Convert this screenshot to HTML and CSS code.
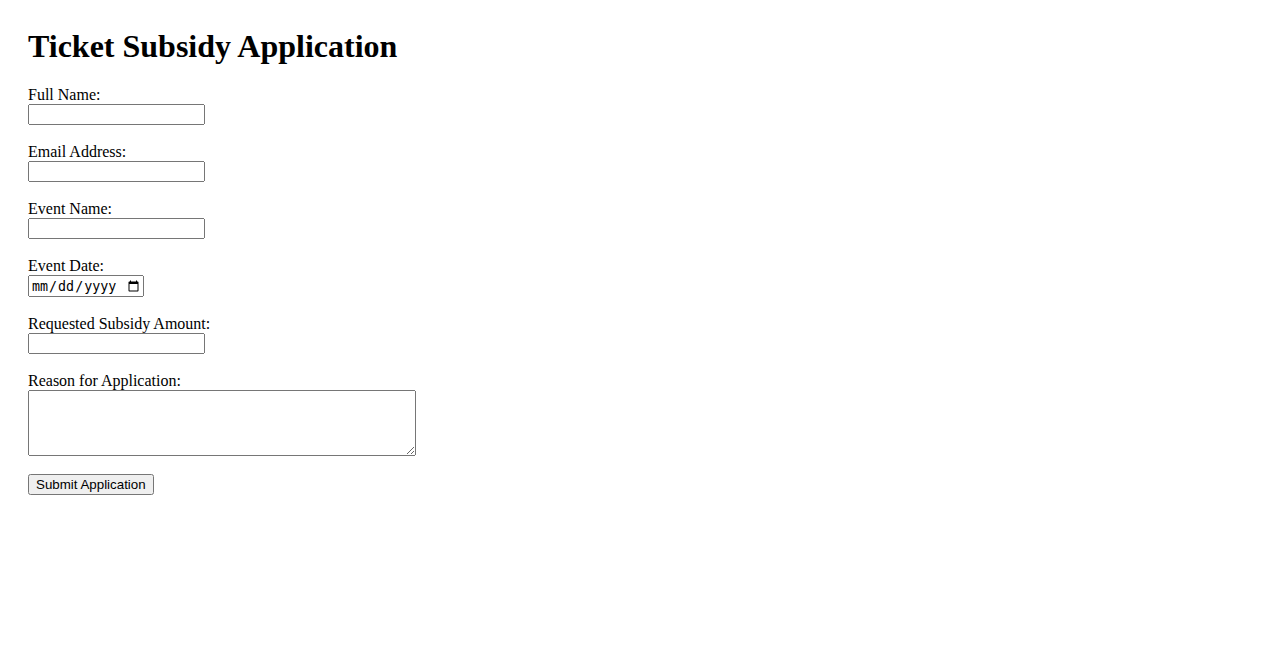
FILE: index.html
```html
<!DOCTYPE html>
<html>
<head>
<meta charset="utf-8">
<title>Ticket Subsidy Application</title>
<link rel="stylesheet" href="styles.css">
</head>
<body>
<div class="page">
<h1 class="title">Ticket Subsidy Application</h1>
<form class="form">
<label for="name">Full Name:</label><br>
<input type="text" id="name" name="name"><br><br>
<label for="email">Email Address:</label><br>
<input type="email" id="email" name="email"><br><br>
<label for="event">Event Name:</label><br>
<input type="text" id="event" name="event"><br><br>
<label for="date">Event Date:</label><br>
<input type="date" id="date" name="date"><br><br>
<label for="amount">Requested Subsidy Amount:</label><br>
<input type="number" id="amount" name="amount"><br><br>
<label for="reason">Reason for Application:</label><br>
<textarea id="reason" name="reason" rows="4" cols="50"></textarea><br><br>
<input type="submit" value="Submit Application">
</form>
</div>
</body>
</html>
```

FILE: styles.css
```css
body {
  margin: 8px;
  font-family: "Liberation Serif", "Times New Roman", serif;
  color: #000;
  background: #fff;
}
.page {
  padding: 20px;
}
.title {
  margin-top: 0;
  font-size: 32px;
}
.form input[type="text"],
.form input[type="email"],
.form input[type="number"] {
  width: 177px;
  height: 21px;
  box-sizing: border-box;
}
.form input[type="date"] {
  width: 116px;
  height: 22px;
  box-sizing: border-box;
}
.form textarea {
  width: 388px;
  height: 66px;
  box-sizing: border-box;
  vertical-align: top;
}
.form input[type="submit"] {
  font-family: "Liberation Sans", Arial, sans-serif;
}
```
